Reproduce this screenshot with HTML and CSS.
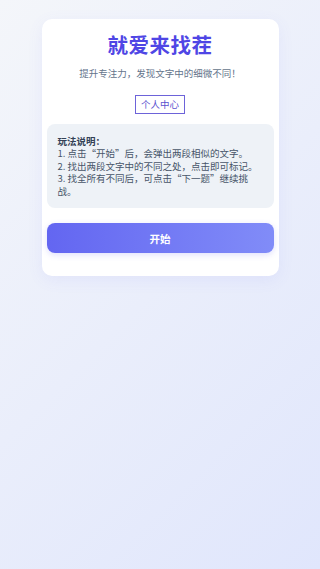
FILE: index.html
```html
<!doctype html>
<html lang="zh-CN">

<head>
    <meta charset="UTF-8" />
    <meta name="viewport" content="width=device-width, initial-scale=1.0" />
    <title>就爱来找茬</title>
    <link rel="stylesheet" href="styles.css">
</head>

<body>
    <div class="card">
        <h1 class="title">就爱来找茬</h1>
        <p class="subtitle">提升专注力，发现文字中的细微不同！</p>
        <div class="profile-row">
            <button class="profile-btn">个人中心</button>
        </div>
        <div class="tips">
            <strong>玩法说明：</strong><br>
            1. 点击“开始”后，会弹出两段相似的文字。<br>
            2. 找出两段文字中的不同之处，点击即可标记。<br>
            3. 找全所有不同后，可点击“下一题”继续挑战。
        </div>
        <button class="start-btn">开始</button>
    </div>
</body>

</html>
```

FILE: styles.css
```css
* {
    box-sizing: border-box;
}

html,
body {
    height: 100%;
}

body {
    margin: 0;
    padding-top: 19px;
    font-family: "Noto Sans CJK SC", "Noto Sans", sans-serif;
    background: linear-gradient(135deg, #f4f6fa 0%, #e0e6fc 100%);
}

.card {
    width: 237px;
    margin: 0 auto;
    padding: 13px 5px 23px;
    background: #fff;
    border-radius: 10px;
    box-shadow: 0 4px 16px rgba(99, 102, 241, 0.08);
    text-align: center;
}

.title {
    margin: 0;
    font-size: 20.5px;
    line-height: 24px;
    font-weight: 700;
    color: #4f46e5;
    letter-spacing: 0.5px;
}

.subtitle {
    margin: 11px 0 0;
    font-size: 9.5px;
    line-height: 12px;
    color: #64748b;
}

.profile-row {
    display: flex;
    justify-content: center;
    margin-top: 16px;
}

.profile-btn {
    height: 19px;
    padding: 0 5px;
    border: 1px solid #6d63d9;
    border-radius: 0;
    background: #fff;
    color: #5b52cf;
    font-family: inherit;
    font-size: 9.5px;
    line-height: 17px;
    cursor: pointer;
}

.tips {
    margin-top: 10px;
    padding: 11px;
    background: #eef2f7;
    border-radius: 8px;
    text-align: left;
    font-size: 9.5px;
    line-height: 12.4px;
    color: #475569;
}

.tips strong {
    color: #334155;
}

.start-btn {
    display: block;
    width: 100%;
    height: 30px;
    margin-top: 15px;
    border: none;
    border-radius: 8px;
    background: linear-gradient(90deg, #6366f1 0%, #818cf8 100%);
    color: #fff;
    font-family: inherit;
    font-size: 10.5px;
    font-weight: 700;
    box-shadow: 0 2px 6px rgba(99, 102, 241, 0.2);
    cursor: pointer;
}
```
